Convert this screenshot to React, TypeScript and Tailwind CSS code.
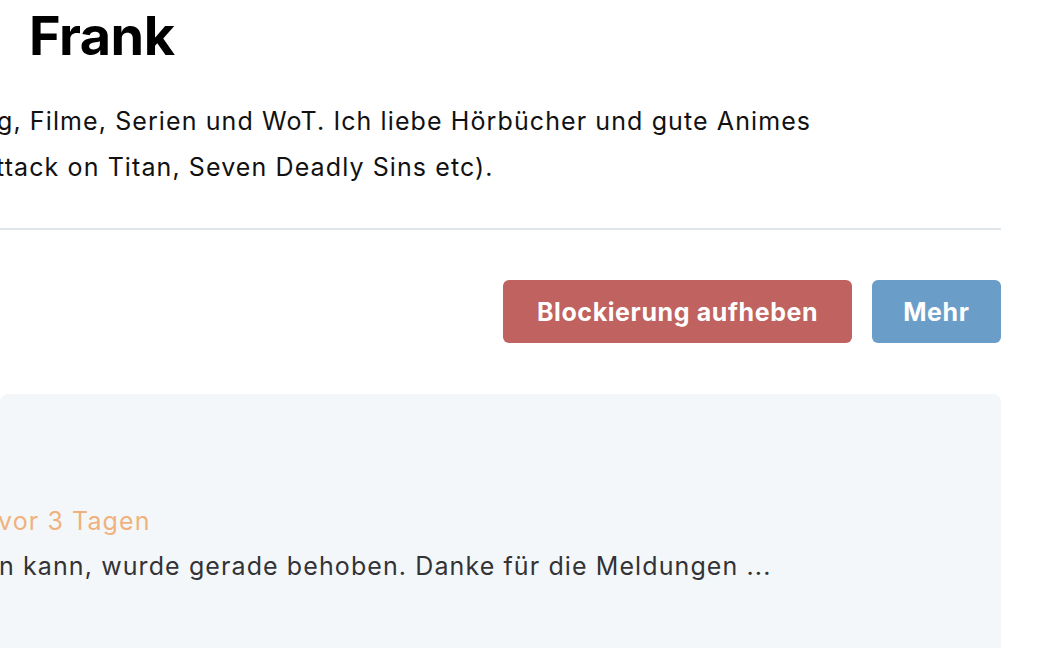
export default function App() {
  return (
    <div className="w-[1064px] h-[648px] overflow-hidden bg-white font-['Inter',sans-serif] text-black">
      <div className="w-[1001px]">
        <h1 className="pl-[29px] pt-[6px] text-[54px] leading-[60px] font-bold tracking-[-0.01em]">Frank</h1>

        <div className="mt-[32px] text-[25px] leading-[46px] tracking-[1.1px] text-[#111] whitespace-nowrap">
          <p className="-ml-[3px]">g, Filme, Serien und WoT. Ich liebe Hörbücher und gute Animes</p>
          <p className="-ml-[4px]">ttack on Titan, Seven Deadly Sins etc).</p>
        </div>

        <div className="mt-[38px] h-[2px] bg-[#dfe6ea]" />

        <div className="mt-[50px] flex justify-end gap-5">
          <button className="h-[63px] pt-[2px] px-[33.5px] rounded-md bg-[#c0625f] text-white text-[25px] tracking-[0.6px] font-bold">
            Blockierung aufheben
          </button>
          <button className="h-[63px] pt-[2px] px-[31.5px] rounded-md bg-[#6a9ec8] text-white text-[25px] tracking-[0.6px] font-bold">
            Mehr
          </button>
        </div>

        <div className="mt-[51px] h-[300px] rounded-lg bg-[#f4f7fa] pt-[109px] text-[25px] tracking-[1.1px] whitespace-nowrap">
          <p className="-ml-[2px] leading-[36px] text-[#efb27c]">vor 3 Tagen</p>
          <p className="-ml-[1px] mt-[9px] leading-[36px] text-[#333336]">
            n kann, wurde gerade behoben. Danke für die Meldungen ...
          </p>
        </div>
      </div>
    </div>
  );
}
